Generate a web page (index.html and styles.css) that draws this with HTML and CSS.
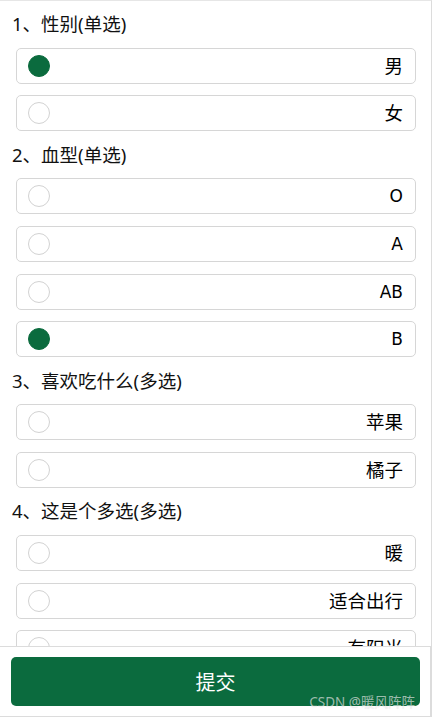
FILE: index.html
```html
<!DOCTYPE html>
<html lang="zh">
<head>
<meta charset="utf-8">
<title>问卷</title>
<link rel="stylesheet" href="styles.css">
</head>
<body>
<div class="page">
  <section class="group">
    <div class="q-title">1、性别(单选)</div>
    <div class="opt"><span class="radio on"></span><span class="label">男</span></div>
    <div class="opt"><span class="radio"></span><span class="label">女</span></div>
  </section>
  <section class="group">
    <div class="q-title">2、血型(单选)</div>
    <div class="opt"><span class="radio"></span><span class="label latin">O</span></div>
    <div class="opt"><span class="radio"></span><span class="label latin">A</span></div>
    <div class="opt"><span class="radio"></span><span class="label latin">AB</span></div>
    <div class="opt"><span class="radio on"></span><span class="label latin">B</span></div>
  </section>
  <section class="group">
    <div class="q-title">3、喜欢吃什么(多选)</div>
    <div class="opt"><span class="radio"></span><span class="label">苹果</span></div>
    <div class="opt"><span class="radio"></span><span class="label">橘子</span></div>
  </section>
  <section class="group">
    <div class="q-title">4、这是个多选(多选)</div>
    <div class="opt"><span class="radio"></span><span class="label">暖</span></div>
    <div class="opt"><span class="radio"></span><span class="label">适合出行</span></div>
    <div class="opt"><span class="radio"></span><span class="label">有阳光</span></div>
  </section>
  <div class="spacer"></div>
</div>
<footer class="footer">
  <button class="submit">提交</button>
  <span class="mark">CSDN @暖风阵阵</span>
</footer>
</body>
</html>
```

FILE: styles.css
```css
html, body {
  margin: 0;
  padding: 0;
  background: #fff;
}
body {
  font-family: "Noto Sans", "Noto Sans CJK SC", sans-serif;
  color: #111;
}
.page {
  width: 431px;
  border-top: 1px solid #e6e6e6;
  border-right: 1px solid #dcdcdc;
  box-sizing: content-box;
  padding: 0;
}
.group {
  padding: 0 15px 0 16px;
}
.q-title {
  font-size: 18.5px;
  line-height: 24px;
  padding: 11.5px 0 11.5px;
  margin-left: -4px;
  color: #111;
}
.group:first-child .q-title {
  padding-top: 11px;
}
.opt {
  height: 36px;
  box-sizing: border-box;
  border: 1px solid #d6d6d6;
  border-radius: 5px;
  display: flex;
  align-items: center;
  justify-content: space-between;
  padding: 0 12px 0 11px;
  margin-bottom: 11.7px;
}
.opt:last-child {
  margin-bottom: 0;
}
.radio {
  width: 22px;
  height: 22px;
  box-sizing: border-box;
  border-radius: 50%;
  border: 1px solid #d2d2d2;
  background: #fff;
}
.radio.on {
  border-color: #0b6b3e;
  background: #0b6b3e;
}
.label {
  font-size: 18.5px;
  line-height: 24px;
  color: #000;
}
.label.latin {
  font-family: "DejaVu Sans", "Noto Sans", sans-serif;
  font-size: 17px;
}
.spacer {
  height: 80px;
}
.footer {
  position: fixed;
  left: 0;
  bottom: 0;
  width: 431px;
  height: 71px;
  background: #fff;
  border-top: 1px solid #dcdcdc;
  border-right: 1px solid #dcdcdc;
  border-bottom: 1px solid #dcdcdc;
  padding: 10px 10px 0 11px;
  box-sizing: border-box;
}
.submit {
  display: block;
  width: 100%;
  height: 49px;
  border: none;
  border-radius: 5px;
  background: #0b6b3e;
  color: #fff;
  font-family: "Noto Sans CJK SC", sans-serif;
  font-size: 20px;
  padding: 0;
}
.mark {
  position: absolute;
  right: 15px;
  bottom: 5px;
  font-family: "Noto Sans", "Noto Sans CJK SC", sans-serif;
  font-size: 13.5px;
  line-height: 18px;
  color: rgba(255, 255, 255, 0.6);
  text-shadow: 0 0 1px rgba(0,0,0,0.15);
}
```
